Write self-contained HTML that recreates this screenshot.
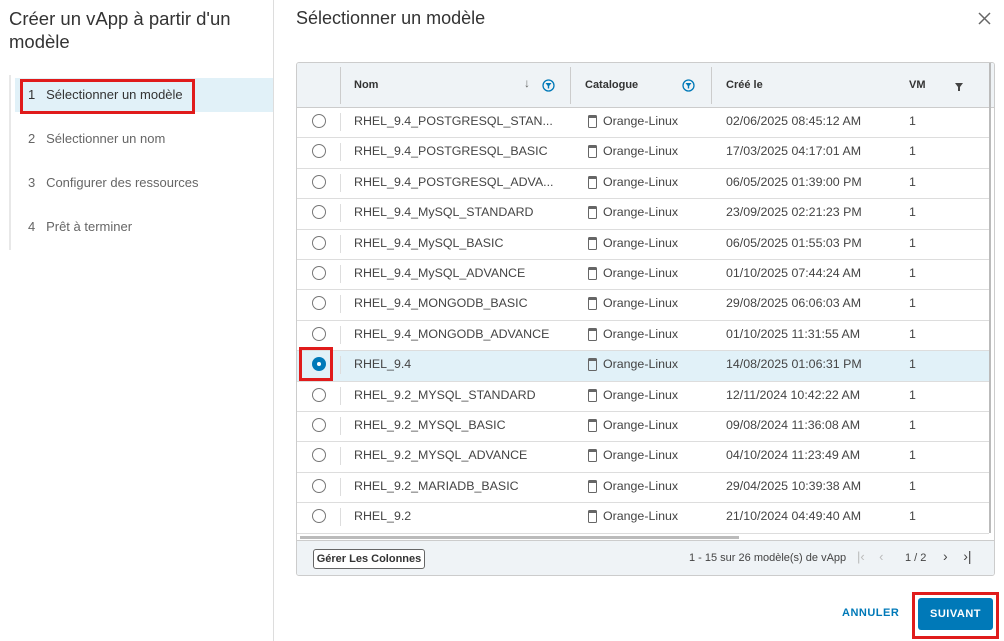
<!DOCTYPE html><html><head><meta charset="utf-8"><style>
*{box-sizing:border-box;margin:0;padding:0}
body{width:1004px;height:641px;background:#fff;font-family:"Liberation Sans",sans-serif;color:#333;position:relative;overflow:hidden}
.a{position:absolute}
.t{font-size:13px;color:#444}
.r{font-size:12.4px;color:#444}
</style></head><body>
<div class="a" style="left:9px;top:7px;font-size:18.5px;line-height:23px;color:#333">Créer un vApp à partir d'un<br>modèle</div>
<div class="a" style="left:9px;top:75px;width:2px;height:175px;background:#e8e8e8"></div>
<div class="a" style="left:15px;top:78px;width:258px;height:34px;background:#e1f1f8"></div>
<div class="a" style="left:20px;top:79px;width:175px;height:35px;border:3px solid #e01b1b"></div>
<div class="a t" style="left:28px;top:87px;color:#333">1&nbsp;&nbsp;&nbsp;Sélectionner un modèle</div>
<div class="a t" style="left:28px;top:131px;color:#666">2&nbsp;&nbsp;&nbsp;Sélectionner un nom</div>
<div class="a t" style="left:28px;top:175px;color:#666">3&nbsp;&nbsp;&nbsp;Configurer des ressources</div>
<div class="a t" style="left:28px;top:219px;color:#666">4&nbsp;&nbsp;&nbsp;Prêt à terminer</div>
<div class="a" style="left:273px;top:0;width:1px;height:641px;background:#ddd"></div>
<div class="a" style="left:296px;top:8px;font-size:18px;color:#333">Sélectionner un modèle</div>
<svg class="a" style="left:978px;top:12px" width="13" height="13"><path d="M1 1L12 12M12 1L1 12" stroke="#666" stroke-width="1.5"/></svg>
<div class="a" style="left:296px;top:62px;width:699px;height:514px;border:1px solid #ccc;border-radius:3px;overflow:hidden">
<div class="a" style="left:0;top:0;width:699px;height:45px;background:#eff3f6;border-bottom:1px solid #ccc"></div>
<div class="a" style="left:43px;top:4px;width:1px;height:37px;background:#ccc"></div>
<div class="a" style="left:273px;top:4px;width:1px;height:37px;background:#ccc"></div>
<div class="a" style="left:414px;top:4px;width:1px;height:37px;background:#ccc"></div>
<div class="a" style="left:57px;top:16px;font-size:11px;font-weight:bold;color:#333">Nom</div>
<div class="a" style="left:227px;top:13px;font-size:12px;color:#666">↓</div>
<svg class="a" style="left:245px;top:16px" width="13" height="13"><circle cx="6.5" cy="6.5" r="5.5" fill="none" stroke="#0079b8" stroke-width="1.3"/><path d="M3.5 4h6l-2.3 3v2.5h-1.4V7z" fill="#0079b8"/></svg>
<div class="a" style="left:288px;top:16px;font-size:11px;font-weight:bold;color:#333">Catalogue</div>
<svg class="a" style="left:385px;top:16px" width="13" height="13"><circle cx="6.5" cy="6.5" r="5.5" fill="none" stroke="#0079b8" stroke-width="1.3"/><path d="M3.5 4h6l-2.3 3v2.5h-1.4V7z" fill="#0079b8"/></svg>
<div class="a" style="left:429px;top:16px;font-size:11px;font-weight:bold;color:#333">Créé le</div>
<div class="a" style="left:612px;top:16px;font-size:11px;font-weight:bold;color:#333">VM</div>
<svg class="a" style="left:658px;top:20px" width="8" height="8"><path d="M0 0h8L5 4v4H3V4z" fill="#444"/></svg>
<div id="rows"></div>
<div class="a" style="left:3px;top:473px;width:439px;height:3px;background:#bbb"></div>
<div class="a" style="left:692px;top:0;width:2px;height:470px;background:#bbb"></div>
<div class="a" style="left:0;top:477px;width:699px;height:37px;background:#eff3f6;border-top:1px solid #ccc"></div>
<div class="a" style="left:16px;top:486px;width:112px;height:20px;border:1px solid #666;border-radius:3px;background:#fff;font-size:11px;font-weight:bold;text-align:center;line-height:18px">Gérer Les Colonnes</div>
<div class="a" style="left:392px;top:489px;font-size:11px;color:#444">1 - 15 sur 26 modèle(s) de vApp</div>
<div class="a" style="left:560px;top:486px;font-size:13px;color:#bbb">|&lsaquo;&nbsp;&nbsp;&nbsp;&nbsp;&lsaquo;</div>
<div class="a" style="left:608px;top:489px;font-size:11px;color:#444">1 / 2</div>
<div class="a" style="left:646px;top:485px;font-size:14px;color:#444">&rsaquo;&nbsp;&nbsp;&nbsp;&nbsp;&rsaquo;|</div>
</div>
<div class="a" style="left:842px;top:607px;font-size:11px;font-weight:bold;color:#0079b8;letter-spacing:.5px">ANNULER</div>
<div class="a" style="left:912px;top:592px;width:87px;height:47px;border:3px solid #e01b1b"></div>
<div class="a" style="left:918px;top:598px;width:75px;height:32px;background:#0079b8;border-radius:3px;color:#fff;font-size:11px;font-weight:bold;text-align:center;line-height:32px;letter-spacing:.5px">SUIVANT</div>
<script>
var d=[["RHEL_9.4_POSTGRESQL_STAN...","02/06/2025 08:45:12 AM"],["RHEL_9.4_POSTGRESQL_BASIC","17/03/2025 04:17:01 AM"],["RHEL_9.4_POSTGRESQL_ADVA...","06/05/2025 01:39:00 PM"],["RHEL_9.4_MySQL_STANDARD","23/09/2025 02:21:23 PM"],["RHEL_9.4_MySQL_BASIC","06/05/2025 01:55:03 PM"],["RHEL_9.4_MySQL_ADVANCE","01/10/2025 07:44:24 AM"],["RHEL_9.4_MONGODB_BASIC","29/08/2025 06:06:03 AM"],["RHEL_9.4_MONGODB_ADVANCE","01/10/2025 11:31:55 AM"],["RHEL_9.4","14/08/2025 01:06:31 PM"],["RHEL_9.2_MYSQL_STANDARD","12/11/2024 10:42:22 AM"],["RHEL_9.2_MYSQL_BASIC","09/08/2024 11:36:08 AM"],["RHEL_9.2_MYSQL_ADVANCE","04/10/2024 11:23:49 AM"],["RHEL_9.2_MARIADB_BASIC","29/04/2025 10:39:38 AM"],["RHEL_9.2","21/10/2024 04:49:40 AM"]];
var h="";d.forEach(function(r,i){var y=45+i*30.4,s=i==8;
h+='<div class="a" style="left:0;top:'+y+'px;width:692px;height:30.4px;border-bottom:1px solid #ddd;background:'+(s?'#e1f1f8':'#fff')+'"></div>';
h+='<div class="a" style="left:43px;top:'+(y+5)+'px;width:1px;height:18px;background:#ddd"></div>';
h+=s?'<div class="a" style="left:15px;top:'+(y+6)+'px;width:14px;height:14px;border-radius:50%;background:#0079b8"><div class="a" style="left:5px;top:5px;width:4px;height:4px;border-radius:50%;background:#fff"></div></div>':'<div class="a" style="left:15px;top:'+(y+6)+'px;width:14px;height:14px;border-radius:50%;border:1px solid #777;background:#fff"></div>';
h+='<div class="a r" style="left:57px;top:'+(y+6)+'px">'+r[0]+'</div>';
h+='<div class="a" style="left:291px;top:'+(y+7)+'px;width:9px;height:13px;border:1.3px solid #666;border-top-width:3px;border-radius:1.5px"></div>';
h+='<div class="a r" style="left:306px;top:'+(y+6)+'px">Orange-Linux</div>';
h+='<div class="a r" style="left:429px;top:'+(y+6)+'px">'+r[1]+'</div>';
h+='<div class="a r" style="left:612px;top:'+(y+6)+'px">1</div>';});
document.getElementById("rows").outerHTML=h;
</script>
<div class="a" style="left:299px;top:347px;width:34px;height:34px;border:3px solid #e01b1b"></div>
</body></html>
